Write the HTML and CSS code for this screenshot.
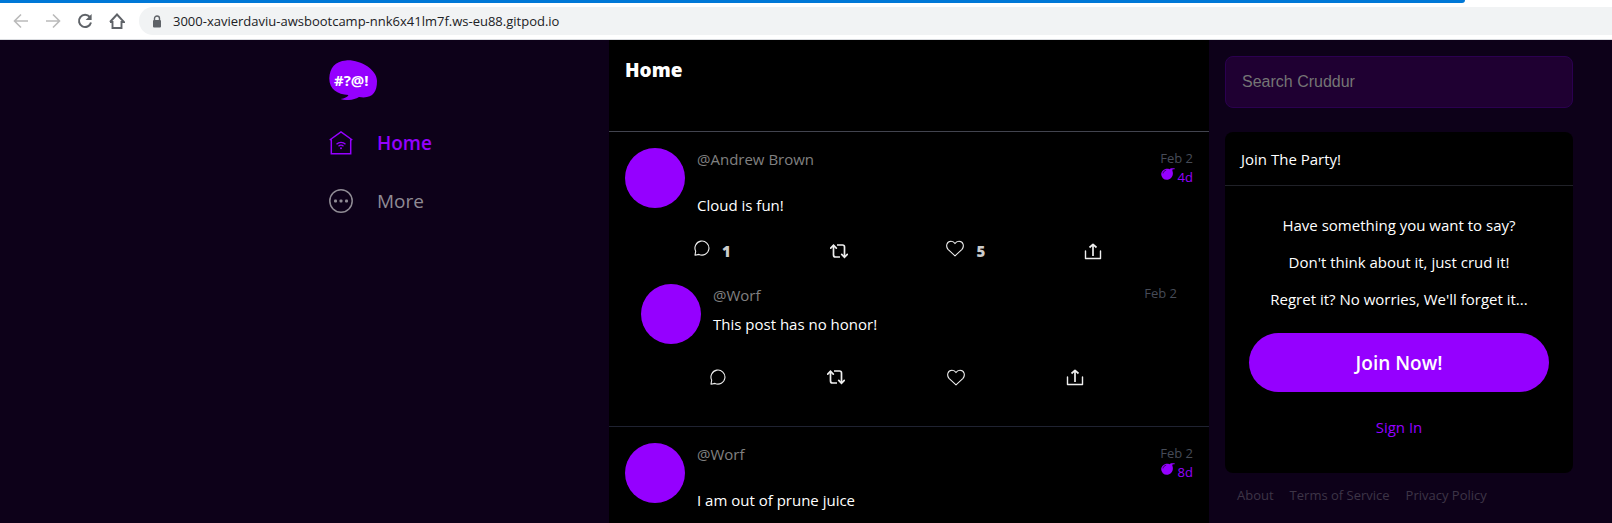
FILE: index.html
```html
<!DOCTYPE html>
<html lang="en">
<head>
<meta charset="utf-8">
<title>Cruddur</title>
<link rel="stylesheet" href="styles.css">
</head>
<body>
<svg class="sprite" aria-hidden="true">
  <symbol id="i-reply" viewBox="0 0 16 16"><path d="M1 15.200 1.700 11.200A7 7 0 1 1 5 14.400Z" fill="none" stroke="currentColor" stroke-width="1.100" stroke-linejoin="round"/></symbol>
  <symbol id="i-repost" viewBox="0 0 18 16"><path d="M3.500 2v9.500a2 2 0 0 0 2 2H10M7 1.500h5.500a2 2 0 0 1 2 2V13" fill="none" stroke="currentColor" stroke-width="1.700"/><path d="M.7 4.700 3.500 1.800l2.800 2.900M11.700 10.800l2.800 2.900 2.800-2.900" fill="none" stroke="currentColor" stroke-width="1.700" stroke-linecap="round"/></symbol>
  <symbol id="i-heart" viewBox="0 0 18 16"><path d="M9 15.300 2 8.800C-.5 5.800.7.700 5 .7c2 0 3.200 1 4 2.400C9.800 1.700 11 .7 13 .7c4.300 0 5.500 5.100 3 8.100Z" fill="none" stroke="currentColor" stroke-width="1.100" stroke-linejoin="round"/></symbol>
  <symbol id="i-share" viewBox="0 0 18 17"><path d="M1.500 8v7.500h15V8" fill="none" stroke="currentColor" stroke-width="1.400" stroke-linejoin="round" stroke-linecap="round"/><path d="M9 13V2M5.500 4.500 9 1.300l3.500 3.200" fill="none" stroke="currentColor" stroke-width="1.700" stroke-linejoin="round"/></symbol>
  <symbol id="i-bomb" viewBox="0 0 14 12"><path d="M8.500 1.200 9.500.6c1-.6 2.200-.3 4.200-.4l-.1 1c-1 .1-1.700 0-2.400.5l.4 1.700c1.300 4.700-2 8.400-5.800 8.400A5.600 5.600 0 0 1 .2 6.200C.2 2.600 4.500-.5 8.500 1.200Z" fill="currentColor"/><path d="M2 5.400C2.400 3.600 3.500 2.500 5.200 2.200" fill="none" stroke="#000" stroke-width=".6"/></symbol>
</svg>

<header class="browser">
  <div class="accent"></div>
  <div class="toolbar">
    <button class="tool faded" aria-label="Back"><svg viewBox="0 0 16 16"><path d="M15 8H2M8 1.500 1.500 8 8 14.500"/></svg></button>
    <button class="tool faded" aria-label="Forward"><svg viewBox="0 0 16 16"><path d="M1 8h13M8 1.500 14.500 8 8 14.500"/></svg></button>
    <button class="tool" aria-label="Reload"><svg viewBox="0 0 16 16"><path d="M12.800 4A6.100 6.100 0 1 0 14 9.500" stroke-width="2"/><path d="M14.600 1v6h-6Z" class="solid"/></svg></button>
    <button class="tool" aria-label="Home page"><svg viewBox="0 0 16 16"><path d="M3.500 8v7h9V8M1 9 8 1.500 15 9H12M4 9H1" stroke-width="1.900"/></svg></button>
    <label class="address">
      <svg class="lock" viewBox="0 0 10 13"><path d="M2.500 5V3.500a2.500 2.500 0 0 1 5 0V5" fill="none" stroke="#5f6368" stroke-width="1.400"/><rect x="1" y="5" width="8" height="7.500" rx="1" fill="#5f6368"/></svg>
      <input type="text" aria-label="Address" value="3000-xavierdaviu-awsbootcamp-nnk6x41lm7f.ws-eu88.gitpod.io">
    </label>
  </div>
</header>

<div class="app">
  <nav class="side">
    <svg class="logo" viewBox="0 0 48 40" role="img" aria-label="Cruddur"><path d="M17 .4C30-.8 48 9 48 21c0 12-5 18-18 16-5 3-12 4-18.500 2 4-.6 7-2 8-4C8 34.500 0 29 .3 18 .8 8 6 1.200 17 .4Z" fill="#9500ff"/><text x="5" y="26" class="logo-text">#?@!</text></svg>
    <a class="nav-link active" href="#"><svg viewBox="0 0 24 24"><path d="M.7 9 12 .9 23.300 9M2.300 8.500v14.300h19.400V8.500"/><path d="M7.500 13.200a6.500 6.500 0 0 1 9 0M9.500 15.300a3.700 3.700 0 0 1 5 0" stroke-width="1.300"/><circle cx="12" cy="17.200" r="1" class="dot"/></svg>Home</a>
    <a class="nav-link" href="#"><svg viewBox="0 0 24 24"><circle cx="12" cy="12" r="11.200"/><g class="dot"><rect x="5" y="10.500" width="3" height="3" rx="1"/><rect x="10.500" y="10.500" width="3" height="3" rx="1"/><rect x="16" y="10.500" width="3" height="3" rx="1"/></g></svg>More</a>
  </nav>

  <main class="feed">
    <div class="feed-head"><h1>Home</h1></div>

    <article class="post">
      <div class="post-top">
        <div class="avatar"></div>
        <div class="post-body"><a class="handle" href="#">@Andrew Brown</a><p class="message">Cloud is fun!</p></div>
        <div class="meta"><time>Feb 2</time><span class="expires"><svg><use href="#i-bomb"/></svg>4d</span></div>
      </div>
      <div class="actions counted">
        <button class="act has-count" aria-label="Reply"><svg class="reply"><use href="#i-reply"/></svg><b>1</b></button>
        <button class="act" aria-label="Repost"><svg><use href="#i-repost"/></svg></button>
        <button class="act has-count" aria-label="Like"><svg><use href="#i-heart"/></svg><b>5</b></button>
        <button class="act" aria-label="Share"><svg><use href="#i-share"/></svg></button>
      </div>
      <div class="thread">
        <div class="post-top">
          <div class="avatar"></div>
          <div class="post-body"><a class="handle" href="#">@Worf</a><p class="message">This post has no honor!</p></div>
          <div class="meta"><time>Feb 2</time></div>
        </div>
        <div class="actions">
          <button class="act" aria-label="Reply"><svg class="reply"><use href="#i-reply"/></svg></button>
          <button class="act" aria-label="Repost"><svg><use href="#i-repost"/></svg></button>
          <button class="act" aria-label="Like"><svg><use href="#i-heart"/></svg></button>
          <button class="act" aria-label="Share"><svg><use href="#i-share"/></svg></button>
        </div>
      </div>
    </article>

    <article class="post">
      <div class="post-top">
        <div class="avatar"></div>
        <div class="post-body"><a class="handle" href="#">@Worf</a><p class="message">I am out of prune juice</p></div>
        <div class="meta"><time>Feb 2</time><span class="expires"><svg><use href="#i-bomb"/></svg>8d</span></div>
      </div>
    </article>
  </main>

  <aside class="rail">
    <input class="search" type="text" placeholder="Search Cruddur" aria-label="Search Cruddur">
    <section class="join">
      <h2>Join The Party!</h2>
      <div class="join-body">
        <p>Have something you want to say?</p>
        <p>Don't think about it, just crud it!</p>
        <p>Regret it? No worries, We'll forget it...</p>
        <a class="join-now" href="#">Join Now!</a>
        <a class="sign-in" href="#">Sign In</a>
      </div>
    </section>
    <footer class="links"><a href="#">About</a><a href="#">Terms of Service</a><a href="#">Privacy Policy</a></footer>
  </aside>
</div>
</body>
</html>
```

FILE: styles.css
```css
* { box-sizing: border-box; }

html, body { height: 100%; }

body {
  margin: 0;
  display: flex;
  flex-direction: column;
  overflow: hidden;
  background: #0d0119;
  color: #fff;
  font: 15px/20px "Open Sans", "Noto Sans", sans-serif;
}

h1, h2, p { margin: 0; }
a { color: inherit; text-decoration: none; }
button { padding: 0; border: 0; background: none; color: inherit; font: inherit; }
.sprite { display: none; }

.browser { flex: none; background: #fff; border-bottom: 1px solid #dadce0; }
.accent { height: 3px; margin-right: 147px; background: #0078d7; border-bottom-right-radius: 6px; }
.toolbar { display: flex; align-items: center; gap: 16px; height: 36px; padding-left: 13px; }
.tool { display: flex; width: 16px; height: 16px; color: #5f6368; }
.tool svg { width: 16px; height: 16px; fill: none; stroke: currentColor; stroke-width: 1.6; }
.tool .solid { fill: currentColor; stroke: none; }
.faded { color: #bababa; }
.address {
  display: flex;
  flex: 1;
  align-items: center;
  gap: 11px;
  height: 32px;
  margin-left: -2px;
  padding-left: 13px;
  border-radius: 16px 0 0 16px;
  background: #f1f3f4;
}
.address { height: 28px; }
.lock { width: 10px; height: 13px; }
.address input {
  flex: 1;
  padding: 0;
  border: 0;
  background: none;
  color: #202124;
  font: 13px/20px "Open Sans", "Noto Sans", sans-serif;
}

.app {
  flex: 1;
  display: grid;
  grid-template-columns: minmax(300px, 1fr) 600px 403px;
  min-height: 0;
}

.side {
  display: flex;
  flex-direction: column;
  justify-self: end;
  width: 280px;
  padding-top: 20px;
}
.logo { width: 48px; height: 40px; margin-bottom: 28px; }
.logo-text { fill: #fff; font: 700 15px "Open Sans", "Noto Sans", sans-serif; }
.nav-link {
  display: flex;
  align-items: center;
  gap: 24px;
  height: 30px;
  margin-bottom: 28px;
  color: #8f8b94;
  font-size: 19px;
  line-height: 30px;
}
.nav-link svg { width: 24px; height: 24px; fill: none; stroke: currentColor; stroke-width: 1.5; }
.nav-link .dot { fill: currentColor; stroke: none; }
.active { color: #9500ff; font-weight: 600; }

.feed { background: #000; overflow: hidden; }
.feed-head { height: 92px; padding: 16px; border-bottom: 1px solid #42444f; }
h1 { font-size: 19px; line-height: 28px; font-weight: 800; }
.post { padding: 16px; border-bottom: 1px solid #1f2231; }
.post-top { display: flex; gap: 12px; }
.avatar { flex: none; width: 60px; height: 60px; border-radius: 50%; background: #9500ff; }
.post-body { flex: 1; padding-top: 1px; }
.handle { display: block; color: #808080; }
.message { margin-top: 26px; }
.thread .message { margin-top: 9px; }
.meta { padding-top: 1px; font-size: 13px; line-height: 19px; text-align: right; color: #464b57; }
.thread .meta { padding-top: 0; }
.meta time { display: block; }
.expires { display: flex; align-items: flex-start; justify-content: flex-end; gap: 3px; color: #9500ff; }
.expires svg { width: 14px; height: 12px; }
.actions {
  display: flex;
  justify-content: space-between;
  align-items: center;
  height: 20px;
  margin: 23px 93px 0 69px;
}
.counted { margin: 26px 91px 0 69px; }
.act { display: flex; align-items: center; gap: 12px; color: #eee; }
.act svg { width: 18px; height: 17px; }
.act .reply { width: 16px; height: 16px; }
.has-count svg { margin-bottom: 6px; }
.act b { color: #ccc; font-weight: 800; }
.thread { padding: 23px 16px; }

.rail { width: 380px; padding: 16px; }
.search {
  display: block;
  width: 100%;
  height: 52px;
  padding: 0 16px;
  border: 1px solid #2b0050;
  border-radius: 8px;
  background: #1f0032;
  color: #fff;
  font: 16px/20px "Liberation Sans", Arial, sans-serif;
}
.search::placeholder { color: #757575; }
.join { margin-top: 24px; border-radius: 8px; background: #000; }
.join h2 { padding: 18px 16px 16px; border-bottom: 1px solid #202128; font-size: 15px; line-height: 19px; font-weight: 400; }
.join-body { display: flex; flex-direction: column; gap: 17px; padding: 29px 24px 36px; text-align: center; }
.join-now {
  padding: 16px 16px 14px;
  margin: 7px 0 8px;
  border-radius: 30px;
  background: #9500ff;
  font-size: 19px;
  line-height: 29px;
  font-weight: 600;
}
.sign-in { color: #9500ff; }
.links { display: flex; gap: 16px; padding: 12px; color: #3d3547; font-size: 13px; line-height: 20px; }
```
